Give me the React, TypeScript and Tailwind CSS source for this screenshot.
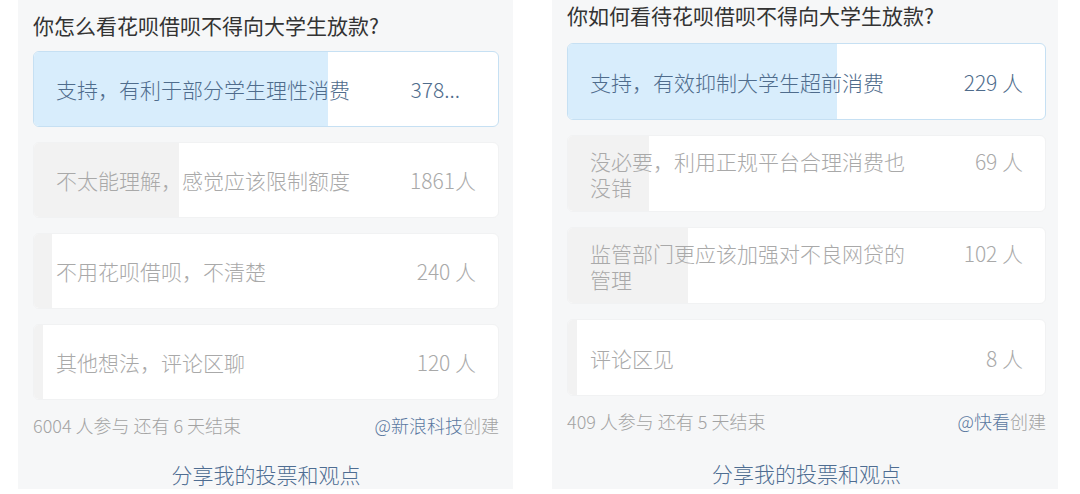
import React from "react"

type Option = {
  text: string
  count: string
  fill: number // px width of the result bar
  picked?: boolean
  truncated?: boolean
}

type Poll = {
  title: string
  options: Option[]
  joined: string
  author: string
}

const polls: Poll[] = [
  {
    title: "你怎么看花呗借呗不得向大学生放款?",
    options: [
      { text: "支持，有利于部分学生理性消费", count: "378...", fill: 294, picked: true, truncated: true },
      { text: "不太能理解，感觉应该限制额度", count: "1861人", fill: 145 },
      { text: "不用花呗借呗，不清楚", count: "240 人", fill: 18 },
      { text: "其他想法，评论区聊", count: "120 人", fill: 9 },
    ],
    joined: "6004 人参与 还有 6 天结束",
    author: "@新浪科技",
  },
  {
    title: "你如何看待花呗借呗不得向大学生放款?",
    options: [
      { text: "支持，有效抑制大学生超前消费", count: "229 人", fill: 269, picked: true },
      { text: "没必要，利用正规平台合理消费也没错", count: "69 人", fill: 81 },
      { text: "监管部门更应该加强对不良网贷的管理", count: "102 人", fill: 120 },
      { text: "评论区见", count: "8 人", fill: 9 },
    ],
    joined: "409 人参与 还有 5 天结束",
    author: "@快看",
  },
]

const font = { fontFamily: '"Noto Sans CJK SC", "Noto Sans", sans-serif' }

function OptionCard({ opt, tall }: { opt: Option; tall: boolean }) {
  return (
    <div
      className={`relative flex items-center overflow-hidden rounded-[6px] border bg-white pl-[22px] pr-[22px] ${
        tall ? "h-[77px]" : "h-[76px]"
      } ${opt.picked ? "border-[#c6e0f3]" : "border-[#f1f2f3]"}`}
    >
      {/* result bar, width from data */}
      <div
        className={`absolute inset-y-0 left-0 ${opt.picked ? "bg-[#d8edfc]" : "bg-[#f2f2f2]"}`}
        style={{ width: opt.fill }}
      />
      <div
        className={`relative flex w-full items-start justify-between text-[21px] font-light leading-[26px] ${
          opt.picked ? "text-[#4f6c8c]" : "text-[#a9a9a9]"
        }`}
      >
        <span className="max-w-[325px]">{opt.text}</span>
        <span className={`shrink-0 ${opt.truncated ? "mr-[16px]" : ""}`}>{opt.count}</span>
      </div>
    </div>
  )
}

function PollPanel({ poll, right }: { poll: Poll; right: boolean }) {
  return (
    <div
      className={`flex h-full flex-col bg-[#f6f7f8] ${
        right ? "w-[506px] pl-[15px] pr-[12px] pt-[1px]" : "w-[495px] pl-[15px] pr-[14px] pt-[11px]"
      }`}
    >
      <div className={`text-[21px] leading-[28px] text-[#333333] ${right ? "mb-[14px]" : "mb-[12px]"}`}>
        {poll.title}
      </div>
      <div className="flex flex-col gap-[15px]">
        {poll.options.map((o) => (
          <OptionCard key={o.text} opt={o} tall={right} />
        ))}
      </div>
      <div className="mt-[14px] flex items-center justify-between text-[18px] font-light leading-[22px] text-[#a3a3a3]">
        <span>{poll.joined}</span>
        <span>
          <span className="text-[#5a78a0]">{poll.author}</span>创建
        </span>
      </div>
      <div className={`text-center text-[21px] font-light leading-[28px] text-[#4e6d92] ${right ? "mt-[27px]" : "mt-[24px]"}`}>
        分享我的投票和观点
      </div>
    </div>
  )
}

export default function App() {
  return (
    <div className="flex h-[494px] w-[1080px] overflow-hidden bg-white" style={font}>
      <div className="w-[18px] shrink-0" />
      <div className="h-[489px] shrink-0">
        <PollPanel poll={polls[0]} right={false} />
      </div>
      <div className="w-[39px] shrink-0" />
      <div className="h-[489px] shrink-0">
        <PollPanel poll={polls[1]} right />
      </div>
    </div>
  )
}
